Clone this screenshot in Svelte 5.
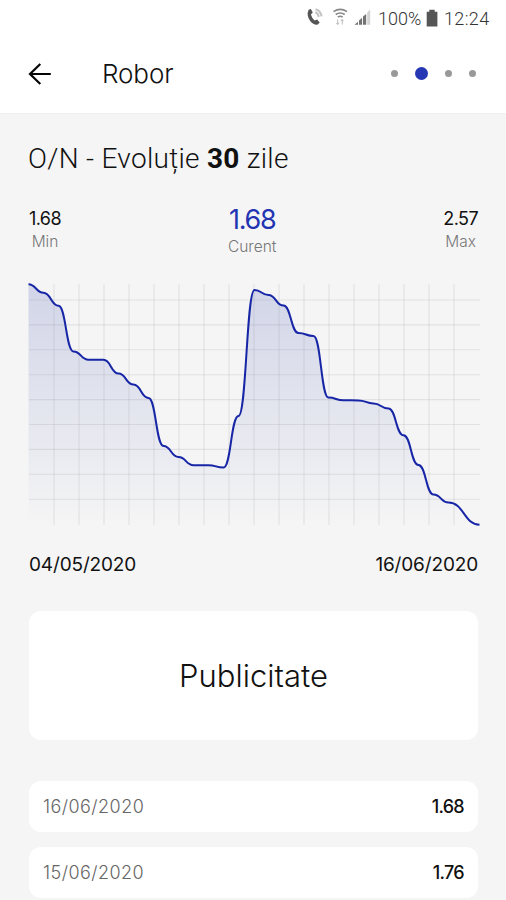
<script>
  const points = [
    [28.5, 284.3], [43.5, 292.7], [58.5, 305.8], [73.5, 351.5], [88.5, 359.8],
    [103.5, 359.8], [118.5, 373.6], [133.5, 384.6], [148.5, 398], [163.5, 446],
    [178.5, 457], [193.5, 465.2], [208.5, 465.2], [223.5, 467.6], [238.5, 416],
    [254.5, 290], [268.5, 295], [283.5, 305.6], [298.5, 333], [313.5, 336],
    [328.5, 397.6], [343.5, 400.3], [358.5, 400.4], [373.5, 403.4], [388.5, 408.6],
    [403.5, 435.3], [418.5, 465], [433.5, 494.6], [448.5, 502.6], [479.5, 524.7]
  ];
  const line = points.reduce((d, [x, y], i) => {
    if (i === 0) return `M${x} ${y}`;
    const [px, py] = points[i - 1];
    const mid = (x + px) / 2;
    return `${d} C${mid} ${py} ${mid} ${y} ${x} ${y}`;
  }, '');
  const area = `${line} V525 H28.5 Z`;
  const columns = Array.from({ length: 17 }, (_, i) => 54 + i * 25);
  const lines = Array.from({ length: 9 }, (_, i) => 300 + i * 24.9);
  const history = [
    { date: '16/06/2020', value: '1.68' },
    { date: '15/06/2020', value: '1.76' }
  ];
</script>

<div class="screen">
  <header>
    <div class="status">
      <svg class="status-icons" width="80" height="22" viewBox="0 0 80 22">
        <path d="M4.2 3.3 6.5 2.6 8.4 6.2 6.5 8.1Q7.5 11.8 10.2 14L12.7 13.2 15.3 16 13.4 18.2Q9.5 19 5.8 14.5 1.6 9.2 4.2 3.3Z" transform="translate(-1.6 .4)" fill="#555" />
        <path d="M9.5 3.2Q14.5 4.4 15.6 10.4M9.3 6.2Q12.2 7.2 12.7 10.8" fill="none" stroke="#c4c4c4" stroke-width="2.2" />
        <path d="M27.5 5.6Q34.2 1.2 41 5.6M29.7 8.5Q34.2 5.5 38.7 8.5M31.8 11Q34.2 9.5 36.6 11" fill="none" stroke="#888" stroke-width="1.7" />
        <path d="M31.7 13.5v5M30.3 16.9l1.4 1.6 1.4-1.6M36.2 18.5v-5M34.8 15.1l1.4-1.6 1.4 1.6" fill="none" stroke="#bbb" stroke-width="1" />
        <g transform="translate(0 .8)">
          <path d="M48.5 18 52 15v3ZM53 13.8 56.1 11v7H53ZM57 9.8 60.2 7.1V18H57Z" fill="#737373" />
          <path d="M61.2 5.6 64.2 2.8V18h-3Z" fill="#d4d4d4" />
        </g>
      </svg>
      <span class="percent">100%</span>
      <svg class="battery" width="12" height="18" viewBox="0 0 12 18"><path d="M3.3.8h5.4v2h2.7v14.7H.7V2.8h2.6Z" fill="#555" /></svg>
      <span class="clock">12:24</span>
    </div>
    <div class="toolbar">
      <svg class="back" width="24" height="24" viewBox="0 0 24 24"><path d="M22.8 12H2M12.3 2 2 12l10.3 10" fill="none" stroke="#050505" stroke-width="2.2" /></svg>
      <h1>Robor</h1>
      <div class="dots"><i></i><i class="active"></i><i></i><i></i></div>
    </div>
  </header>

  <main>
    <h2>O/N - Evoluție <b>30</b> zile</h2>
    <section class="stats">
      <div class="stat"><strong>1.68</strong><span>Min</span></div>
      <div class="stat current"><strong>1.68</strong><span>Curent</span></div>
      <div class="stat max"><strong>2.57</strong><span>Max</span></div>
    </section>
    <svg class="chart" width="506" height="256" viewBox="0 276 506 256">
      <defs>
        <linearGradient id="fill" x1="0" y1="284" x2="0" y2="525" gradientUnits="userSpaceOnUse">
          <stop offset="0" stop-color="#2539a8" stop-opacity=".17" />
          <stop offset=".5" stop-color="#2539a8" stop-opacity=".09" />
          <stop offset="1" stop-color="#2539a8" stop-opacity="0" />
        </linearGradient>
      </defs>
      <path d={area} fill="url(#fill)" />
      <g stroke="#777" stroke-opacity=".15" stroke-width="1.1">
        {#each columns as x}<path d={`M${x} 284V525`} />{/each}
        {#each lines as y}<path d={`M29 ${y}H480`} />{/each}
      </g>
      <path d={line} fill="none" stroke="#1726a6" stroke-width="2" stroke-linejoin="round" />
    </svg>
    <div class="range"><span>04/05/2020</span><span class="end">16/06/2020</span></div>
    <div class="advert"><span>Publicitate</span></div>
    <div class="history">
      {#each history as row}
        <div class="row"><span>{row.date}</span><strong>{row.value}</strong></div>
      {/each}
    </div>
  </main>
</div>

<style>
  :global(body) { margin: 0; background: #f5f5f5; }
  .screen { width: 506px; height: 900px; overflow: hidden; background: #f5f5f5; color: #111; font-family: Inter, "Liberation Sans", sans-serif; }
  header { height: 113px; background: #fff; box-shadow: 0 0 1px #ddd; }
  .status { height: 36px; display: flex; align-items: center; padding-left: 306px; font: 300 18px/22px Roboto, sans-serif; color: #333; }
  .status-icons { margin-right: -8px; margin-top: -2px; flex: none; }
  .percent { width: 48px; white-space: nowrap; position: relative; top: 1px; }
  .battery { flex: none; margin-top: -1px; }
  .clock { margin-left: 6px; letter-spacing: .35px; position: relative; top: 1px; }
  .toolbar { height: 77px; display: flex; align-items: center; padding: 0 30px 0 28px; box-sizing: border-box; }
  .back { margin-top: -2px; }
  h1 { margin: -2px 0 0 50px; font-size: 26px; line-height: 34px; font-weight: 300; letter-spacing: -.1px; }
  .dots { display: flex; align-items: center; margin: -3px 0 0 auto; }
  .dots i { width: 7px; height: 7px; border-radius: 50%; background: #999; margin-left: 17px; }
  .dots i.active { width: 13px; height: 13px; background: #2637b4; }
  h2 { margin: 0; height: 34px; padding: 29px 0 0 28px; font: 300 28px/34px Roboto, sans-serif; letter-spacing: .3px; white-space: nowrap; }
  h2 b { font-weight: 700; }
  .stats { height: 100px; padding: 31px 28px 0 29px; box-sizing: border-box; display: flex; justify-content: space-between; align-items: flex-start; }
  .stat { display: flex; flex-direction: column; align-items: center; }
  .stat strong { font-size: 18px; line-height: 24px; font-weight: 400; letter-spacing: -.6px; }
  .stat span { font-size: 15.5px; line-height: 22px; font-weight: 300; color: #777; }
  .stat.current strong { color: #2334b3; font-size: 27px; line-height: 26px; letter-spacing: -1.3px; }
  .stat.current span { line-height: 28px; }
  .chart { display: block; }
  .range { height: 79px; padding: 21px 28px 0 29px; box-sizing: border-box; display: flex; justify-content: space-between; font-size: 19px; line-height: 24px; font-weight: 400; letter-spacing: -.15px; }
  .advert { height: 129px; margin: 0 28px 0 29px; border-radius: 12px; background: #fff; display: flex; align-items: center; justify-content: center; font-size: 31px; font-weight: 300; }
  .history { display: flex; flex-direction: column; gap: 15px; margin: 41px 28px 0 29px; }
  .row { height: 51px; box-sizing: border-box; padding: 0 14px; border-radius: 12px; background: #fff; display: flex; align-items: center; justify-content: space-between; font-size: 18px; }
  .row span { font-weight: 300; color: #666; letter-spacing: .45px; }
  .row strong { font-weight: 500; letter-spacing: -.7px; }
</style>
